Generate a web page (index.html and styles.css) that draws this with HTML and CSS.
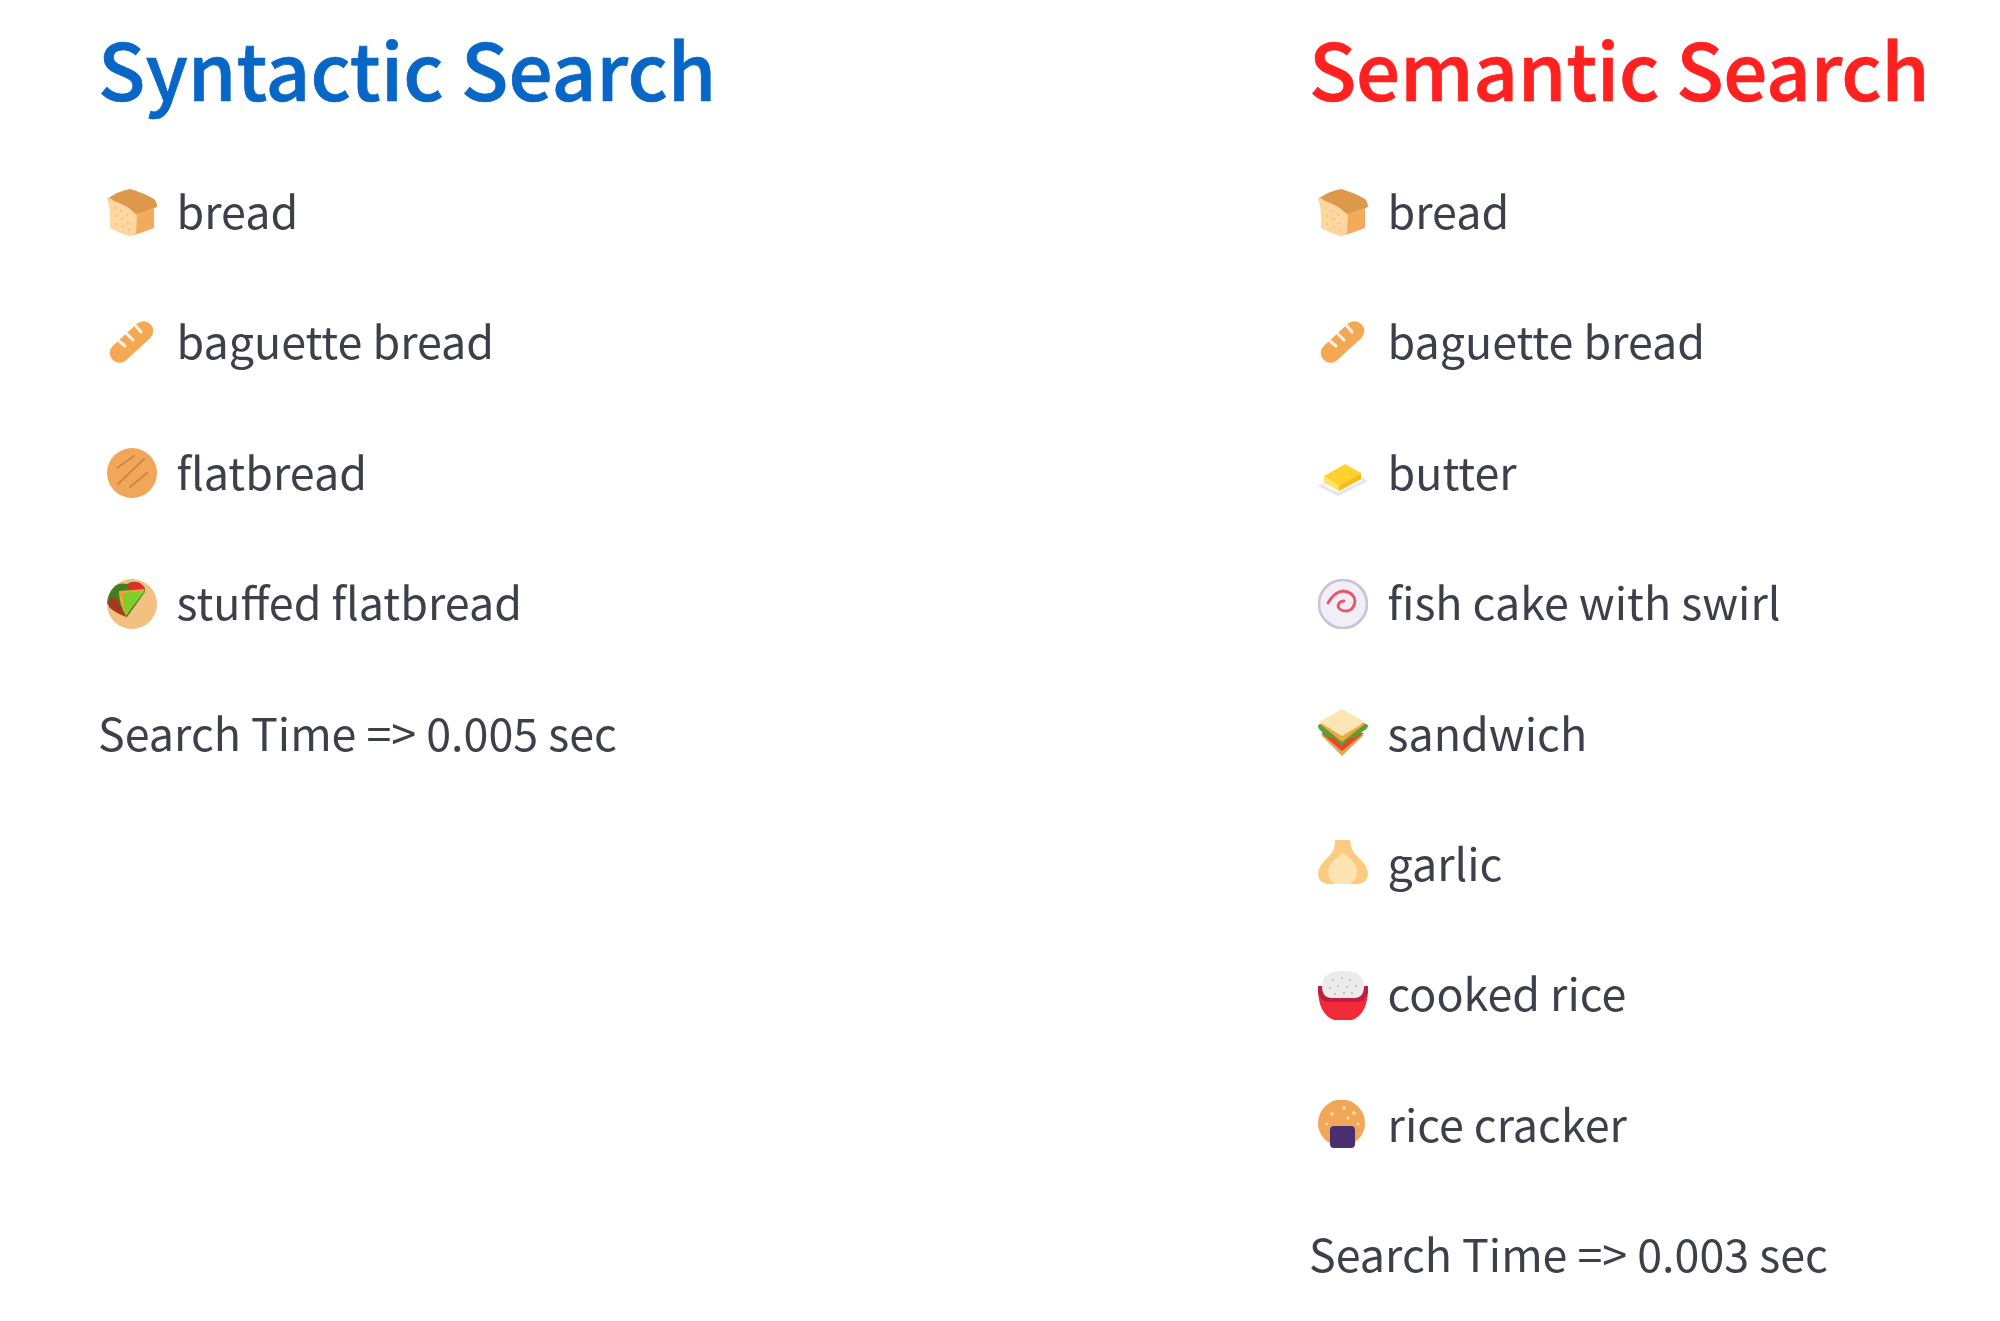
FILE: index.html
```html
<!DOCTYPE html>
<html lang="en">
<head>
<meta charset="utf-8">
<title>Syntactic and Semantic Search</title>
<link rel="stylesheet" href="styles.css">
</head>
<body>
<svg class="defs" aria-hidden="true">
  <symbol id="bread" viewBox="0 0 50 50">
    <path fill="#dd984c" d="M0 11 Q11 3 23 1 Q37 5 47 11 Q50 14 50 19 L30 27 Q12 18 0 11Z"/>
    <path fill="#f4aa5c" d="M29 26 L47 20 V40 Q35 45 23 48Z"/>
    <path fill="#fcd7a0" d="M0 11 Q3 9 7 13 Q20 17 30 27 L29 45 Q26 48 22 48 Q12 45 3 40 Q4 20 0 11Z"/>
    <g fill="#f2bc7c"><circle cx="8" cy="20" r="1"/><circle cx="14" cy="23" r="1"/><circle cx="20" cy="27" r="1"/><circle cx="9" cy="28" r="1"/><circle cx="15" cy="31" r="1"/><circle cx="21" cy="35" r="1"/><circle cx="9" cy="36" r="1"/><circle cx="16" cy="39" r="1"/><circle cx="22" cy="42" r="1"/></g>
  </symbol>
  <symbol id="baguette" viewBox="0 0 50 50">
    <path stroke="#f4a853" stroke-width="19.5" stroke-linecap="round" fill="none" d="M12.5 35 L36.5 13"/>
    <path stroke="#fff3e0" stroke-width="3" stroke-linecap="round" fill="none" d="M12 23 L18 28 M20 16 L26 22 M29 8 L34 14"/>
  </symbol>
  <symbol id="flatbread" viewBox="0 0 50 50">
    <circle cx="25" cy="25" r="25" fill="#f2a65a"/>
    <path stroke="#c98a49" stroke-width="2" stroke-linecap="round" fill="none" d="M10 20 L27 8 M11 36 L37 11 M23 39 L40 25"/>
  </symbol>
  <symbol id="stuffed" viewBox="0 0 50 50">
    <circle cx="25" cy="25" r="25" fill="#f4c07f"/>
    <path fill="#3e7f22" d="M7 8 Q12 3 20 5 Q30 -1 38 9 L38 13 L20 38 Q6 33 0 24 Q1 14 7 8Z"/>
    <path fill="#a63a1e" d="M1 22 Q6 16 10 21 L20 38 Q8 34 2 28Z"/>
    <path fill="#dd2e2e" d="M19 7 Q26 1 33 4 Q37 7 38 11 L24 10Z"/>
    <path fill="#f7a13c" d="M12 12 L38 10 L19 37 Q12 25 12 12Z"/>
    <path fill="#7fce2b" d="M16 14 L38 12 L19 36 Q15 25 16 14Z"/>
  </symbol>
  <symbol id="butter" viewBox="0 0 50 50">
    <path fill="#e4e4ea" d="M0 38 L20 48 L50 33 L40 28 L10 33Z"/>
    <path fill="#f6f6f9" d="M4 37 L20 45 L45 33 L38 29Z"/>
    <path fill="#ffd12e" d="M6 28 L27 16 L43 25 L21 38Z"/>
    <path fill="#ffe45c" d="M6 28 L21 38 V43 L6 34Z"/>
    <path fill="#f8bc14" d="M21 38 L43 25 V31 L21 43Z"/>
  </symbol>
  <symbol id="fishcake" viewBox="0 0 50 50">
    <circle cx="25" cy="25" r="24" fill="#f2eef8" stroke="#c9c3d2" stroke-width="2.6"/>
    <path fill="none" stroke="#ec5566" stroke-width="2.8" stroke-linecap="round" d="M10 24 Q16 13 25 12 Q36 13 37 22 Q36 31 29 32 Q21 32 20 27 Q21 22 26 22"/>
  </symbol>
  <symbol id="sandwich" viewBox="0 0 50 50">
    <path fill="#e0a45c" d="M3 26 L24 47 L46 26Z"/>
    <path fill="#e8452c" d="M3 24 L24 42 L46 24Z"/>
    <path fill="#5c9e31" d="M0 16 Q0 20 3 22 L10 29 L16 29 L24 37 L32 29 L38 29 L45 22 Q50 20 50 16 L25 5Z"/>
    <path fill="#f2a63f" d="M2 15 L24 33 L47 15Z"/>
    <path fill="#fde5b4" d="M1 13 L24 0 L47 13 L24 27Z"/>
  </symbol>
  <symbol id="garlic" viewBox="0 0 50 50">
    <path fill="#fdcb80" d="M17 0 H32 Q33 10 38 15 Q50 26 50 33 Q50 43 40 44 H10 Q0 43 0 33 Q0 26 12 15 Q17 10 17 0Z"/>
    <path fill="#fde4b0" d="M25 13 Q11 22 10 31 Q10 40 17 44 H32 Q39 40 39 31 Q38 22 25 13Z"/>
  </symbol>
  <symbol id="rice" viewBox="0 0 50 50">
    <path fill="#f02a37" d="M0 18 Q0 44 16 50 H34 Q50 44 50 18Z"/>
    <path fill="#c21c3e" d="M0 16 H50 V22 Q48 32 38 32 H12 Q2 32 0 22Z"/>
    <path fill="#ebebeb" d="M4 16 Q4 1 25 1 Q46 1 46 16 Q46 28 36 28 H14 Q4 28 4 16Z"/>
    <g fill="#b4b4ba"><circle cx="15" cy="10" r="1"/><circle cx="24" cy="8" r="1"/><circle cx="32" cy="10" r="1"/><circle cx="12" cy="18" r="1"/><circle cx="20" cy="16" r="1"/><circle cx="29" cy="17" r="1"/><circle cx="38" cy="16" r="1"/><circle cx="17" cy="24" r="1"/><circle cx="26" cy="23" r="1"/><circle cx="34" cy="23" r="1"/></g>
  </symbol>
  <symbol id="cracker" viewBox="0 0 50 50">
    <circle cx="23.5" cy="23" r="23.5" fill="#f0a858"/>
    <g fill="#fbdcb0"><circle cx="14" cy="14" r="1.8"/><circle cx="26" cy="8" r="1.8"/><circle cx="36" cy="13" r="1.8"/><circle cx="9" cy="24" r="1.5"/><circle cx="30" cy="18" r="1.5"/><circle cx="40" cy="24" r="1.5"/></g>
    <rect x="12" y="26" width="25" height="22" rx="4" fill="#4a2f6e"/>
  </symbol>
</svg>
<main class="page">
  <section class="col">
    <h1 class="title syntactic">Syntactic Search</h1>
    <ul class="results">
      <li class="item"><svg class="emoji"><use href="#bread"/></svg>bread</li>
      <li class="item"><svg class="emoji"><use href="#baguette"/></svg>baguette bread</li>
      <li class="item"><svg class="emoji"><use href="#flatbread"/></svg>flatbread</li>
      <li class="item"><svg class="emoji"><use href="#stuffed"/></svg>stuffed flatbread</li>
      <li class="item">Search Time =&gt; 0.005 sec</li>
    </ul>
  </section>
  <section class="col">
    <h1 class="title semantic">Semantic Search</h1>
    <ul class="results">
      <li class="item"><svg class="emoji"><use href="#bread"/></svg>bread</li>
      <li class="item"><svg class="emoji"><use href="#baguette"/></svg>baguette bread</li>
      <li class="item"><svg class="emoji"><use href="#butter"/></svg>butter</li>
      <li class="item"><svg class="emoji"><use href="#fishcake"/></svg>fish cake with swirl</li>
      <li class="item"><svg class="emoji"><use href="#sandwich"/></svg>sandwich</li>
      <li class="item"><svg class="emoji"><use href="#garlic"/></svg>garlic</li>
      <li class="item"><svg class="emoji"><use href="#rice"/></svg>cooked rice</li>
      <li class="item"><svg class="emoji"><use href="#cracker"/></svg>rice cracker</li>
      <li class="item">Search Time =&gt; 0.003 sec</li>
    </ul>
  </section>
</main>
</body>
</html>
```
FILE: styles.css
```css
html, body {
  margin: 0;
  background: #fff;
}
.defs {
  position: absolute;
  width: 0;
  height: 0;
}
.page {
  display: grid;
  grid-template-columns: 1211px 1fr;
  padding: 16px 0 0 98px;
  font-family: "Noto Sans CJK SC", "Noto Sans", sans-serif;
  color: #3d3f4a;
  filter: blur(0.6px);
}
.title {
  margin: 0;
  font-size: 78px;
  line-height: 102px;
  font-weight: 500;
  -webkit-text-stroke: 0.7px currentColor;
}
.syntactic { color: #0866c6; }
.semantic {
  color: #ff2020;
  letter-spacing: -0.3px;
}
.results {
  list-style: none;
  margin: 0;
  padding: 26.4px 0 0;
}
.item {
  display: flex;
  align-items: center;
  height: 130.4px;
  font-size: 44.8px;
  white-space: pre;
}
.emoji {
  width: 50px;
  height: 50px;
  margin: 6px 19.5px 0 9px;
  flex: none;
}
```
